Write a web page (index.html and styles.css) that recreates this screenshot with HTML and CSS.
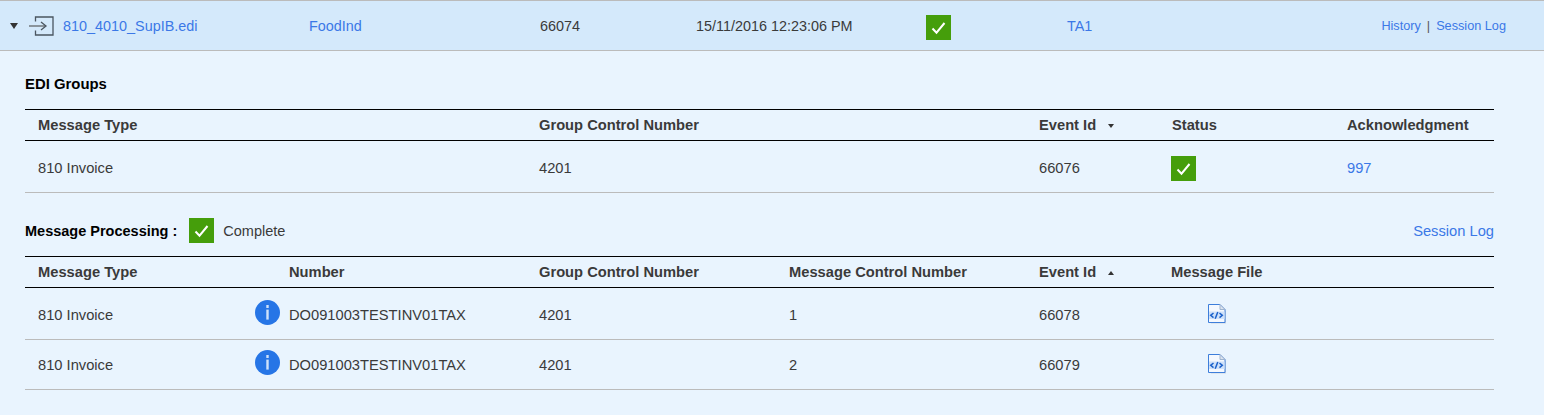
FILE: index.html
```html
<!DOCTYPE html>
<html lang="en">
<head>
    <meta charset="UTF-8">
    <meta name="viewport" content="width=device-width, initial-scale=1.0">
    <title>EDI Session</title>
    <link rel="stylesheet" href="styles.css">
</head>
<body>
    <svg class="defs" width="0" height="0" aria-hidden="true">
        <symbol id="ok" viewBox="0 0 25 25">
            <rect width="25" height="25" fill="#459e0b"/>
            <path d="M6.500 13.500l4 4.200 8-9.700" fill="none" stroke="#fff" stroke-width="2"/>
        </symbol>
        <symbol id="info" viewBox="0 0 25 25">
            <circle cx="12.500" cy="12.500" r="12.500" fill="#2675e6"/>
            <rect x="11.300" y="5" width="2.400" height="3" fill="#cfe2fa"/>
            <rect x="11.300" y="9.600" width="2.400" height="10" fill="#cfe2fa"/>
        </symbol>
        <symbol id="xml" viewBox="0 0 20 20">
            <path d="M19 6.500v13h-15v-1h14v-12z" fill="#cfd6df"/>
            <path d="M1.500 .5h11.500l5 5v13h-16.500z" fill="#f4f8fe" stroke="#3d7edb"/>
            <path d="M13 .5v5h5z" fill="#dbe3ee" stroke="#9fb4d0"/>
            <path d="M2 7.500h15.500v7.500h-15.500z" fill="#cfe1f9"/>
            <path d="M6.500 9l-2.800 2.300 2.800 2.300M12.500 9l2.800 2.300-2.800 2.300M10.800 8l-2.600 6.800" fill="none" stroke="#1c62cb" stroke-width="1.500"/>
        </symbol>
    </svg>

    <div class="file-row">
        <span class="caret"></span>
        <svg class="in-icon" width="25" height="20" viewBox="0 0 25 20">
            <path d="M6.500 5.500v-4.500h17.500v18h-17.500v-4.500" fill="none" stroke="#4a5560" stroke-width="1.300"/>
            <path d="M0 10h16" stroke="#8a949c" stroke-width="2"/>
            <path d="M12 6l5 4-5 4" fill="none" stroke="#4a5560" stroke-width="1.300"/>
        </svg>
        <a class="cell-name" href="#">810_4010_SupIB.edi</a>
        <a class="cell-partner" href="#">FoodInd</a>
        <span class="cell-id">66074</span>
        <span class="cell-date">15/11/2016 12:23:06 PM</span>
        <svg class="cell-ok ok" width="25" height="25"><use href="#ok"/></svg>
        <a class="cell-ack" href="#">TA1</a>
        <span class="file-links"><a href="#">History</a><i>|</i><a href="#">Session Log</a></span>
    </div>

    <div class="content">
        <h2 class="groups-title">EDI Groups</h2>
        <table class="grid">
            <colgroup>
                <col class="c-501"><col class="c-500"><col class="c-133"><col class="c-175"><col>
            </colgroup>
            <thead>
                <tr>
                    <th>Message Type</th>
                    <th>Group Control Number</th>
                    <th>Event Id<span class="sort-down"></span></th>
                    <th>Status</th>
                    <th>Acknowledgment</th>
                </tr>
            </thead>
            <tbody>
                <tr class="row-tall">
                    <td>810 Invoice</td>
                    <td>4201</td>
                    <td>66076</td>
                    <td><svg class="ok status-ok" width="25" height="25"><use href="#ok"/></svg></td>
                    <td><a href="#">997</a></td>
                </tr>
            </tbody>
        </table>

        <div class="process-bar">
            <strong>Message Processing :</strong>
            <svg class="ok" width="25" height="25"><use href="#ok"/></svg>
            <span>Complete</span>
            <a href="#">Session Log</a>
        </div>

        <table class="grid">
            <colgroup>
                <col class="c-251"><col class="c-250"><col class="c-250"><col class="c-250"><col class="c-132"><col>
            </colgroup>
            <thead>
                <tr>
                    <th>Message Type</th>
                    <th>Number</th>
                    <th>Group Control Number</th>
                    <th>Message Control Number</th>
                    <th>Event Id<span class="sort-up"></span></th>
                    <th>Message File</th>
                </tr>
            </thead>
            <tbody>
                <tr class="row-first">
                    <td>810 Invoice</td>
                    <td class="num-cell"><svg class="info" width="25" height="25"><use href="#info"/></svg>DO091003TESTINV01TAX</td>
                    <td>4201</td>
                    <td>1</td>
                    <td>66078</td>
                    <td><svg class="xml" width="20" height="20"><use href="#xml"/></svg></td>
                </tr>
                <tr>
                    <td>810 Invoice</td>
                    <td class="num-cell"><svg class="info" width="25" height="25"><use href="#info"/></svg>DO091003TESTINV01TAX</td>
                    <td>4201</td>
                    <td>2</td>
                    <td>66079</td>
                    <td><svg class="xml" width="20" height="20"><use href="#xml"/></svg></td>
                </tr>
            </tbody>
        </table>
    </div>
</body>
</html>
```

FILE: styles.css
```css
html, body {
    margin: 0;
    height: 415px;
    overflow: hidden;
}
body {
    font-family: "Liberation Sans", Arial, sans-serif;
    font-size: 14.7px;
    color: #3a3a3a;
    background-color: #e9f4fe;
}
a {
    color: #3b78e7;
    text-decoration: none;
}
svg {
    display: block;
}
.defs {
    position: absolute;
}

.file-row {
    display: flex;
    align-items: center;
    height: 49px;
    font-size: 14.4px;
    background-color: #d4e9fb;
    border-top: 1px solid #bbb;
    border-bottom: 1px solid #bbb;
}
.caret {
    width: 0;
    height: 0;
    margin-left: 10px;
    border-left: 4px solid transparent;
    border-right: 4px solid transparent;
    border-top: 6px solid #333;
}
.in-icon {
    margin-left: 11px;
}
.cell-name {
    margin-left: 9px;
    width: 246px;
}
.cell-partner {
    width: 231px;
}
.cell-id {
    width: 156px;
}
.cell-date {
    width: 230px;
}
.cell-ok {
    margin: 4px 116px 0 0;
}
.cell-ack {
    flex: 1;
}
.file-links {
    margin-right: 38px;
    font-size: 12.7px;
}
.file-links i {
    margin: 0 6px;
    font-style: normal;
    color: #555;
}

.content {
    padding: 0 50px 0 25px;
}
.groups-title {
    margin: 0;
    padding-top: 25px;
    height: 33px;
    font-size: 14.9px;
    line-height: 16px;
    color: #000;
}
.grid {
    width: 1469px;
    border-collapse: collapse;
    table-layout: fixed;
}
.c-501 { width: 501px; }
.c-500 { width: 500px; }
.c-133 { width: 133px; }
.c-175 { width: 175px; }
.c-251 { width: 251px; }
.c-250 { width: 250px; }
.c-132 { width: 132px; }

.grid th {
    height: 30px;
    padding: 0 0 0 13px;
    text-align: left;
    border-top: 1px solid #000;
    border-bottom: 1px solid #000;
}
.grid td {
    height: 49px;
    padding: 0 0 0 13px;
    border-bottom: 1px solid #bbb;
}
.grid .row-tall td, .grid .row-first td {
    height: 49px;
    padding-top: 2px;
}
.status-ok {
    margin: 1px 0 0 -1px;
}
.sort-down, .sort-up {
    display: inline-block;
    margin-left: 12px;
    vertical-align: middle;
    border-left: 3px solid transparent;
    border-right: 3px solid transparent;
}
.sort-down {
    border-top: 4px solid #333;
}
.sort-up {
    border-bottom: 4px solid #333;
}

.process-bar {
    display: flex;
    align-items: center;
    width: 1469px;
    height: 51px;
    padding-top: 12px;
}
.process-bar strong {
    font-size: 14.5px;
    color: #000;
}
.process-bar .ok {
    margin-left: 12px;
}
.process-bar span {
    margin-left: 9px;
    flex: 1;
    font-size: 14.5px;
}
.num-cell {
    position: relative;
}
.info {
    position: absolute;
    left: -21px;
    top: 10px;
}
.row-first .info {
    top: 12px;
}
.xml {
    margin: -1px 0 0 36px;
}
```
